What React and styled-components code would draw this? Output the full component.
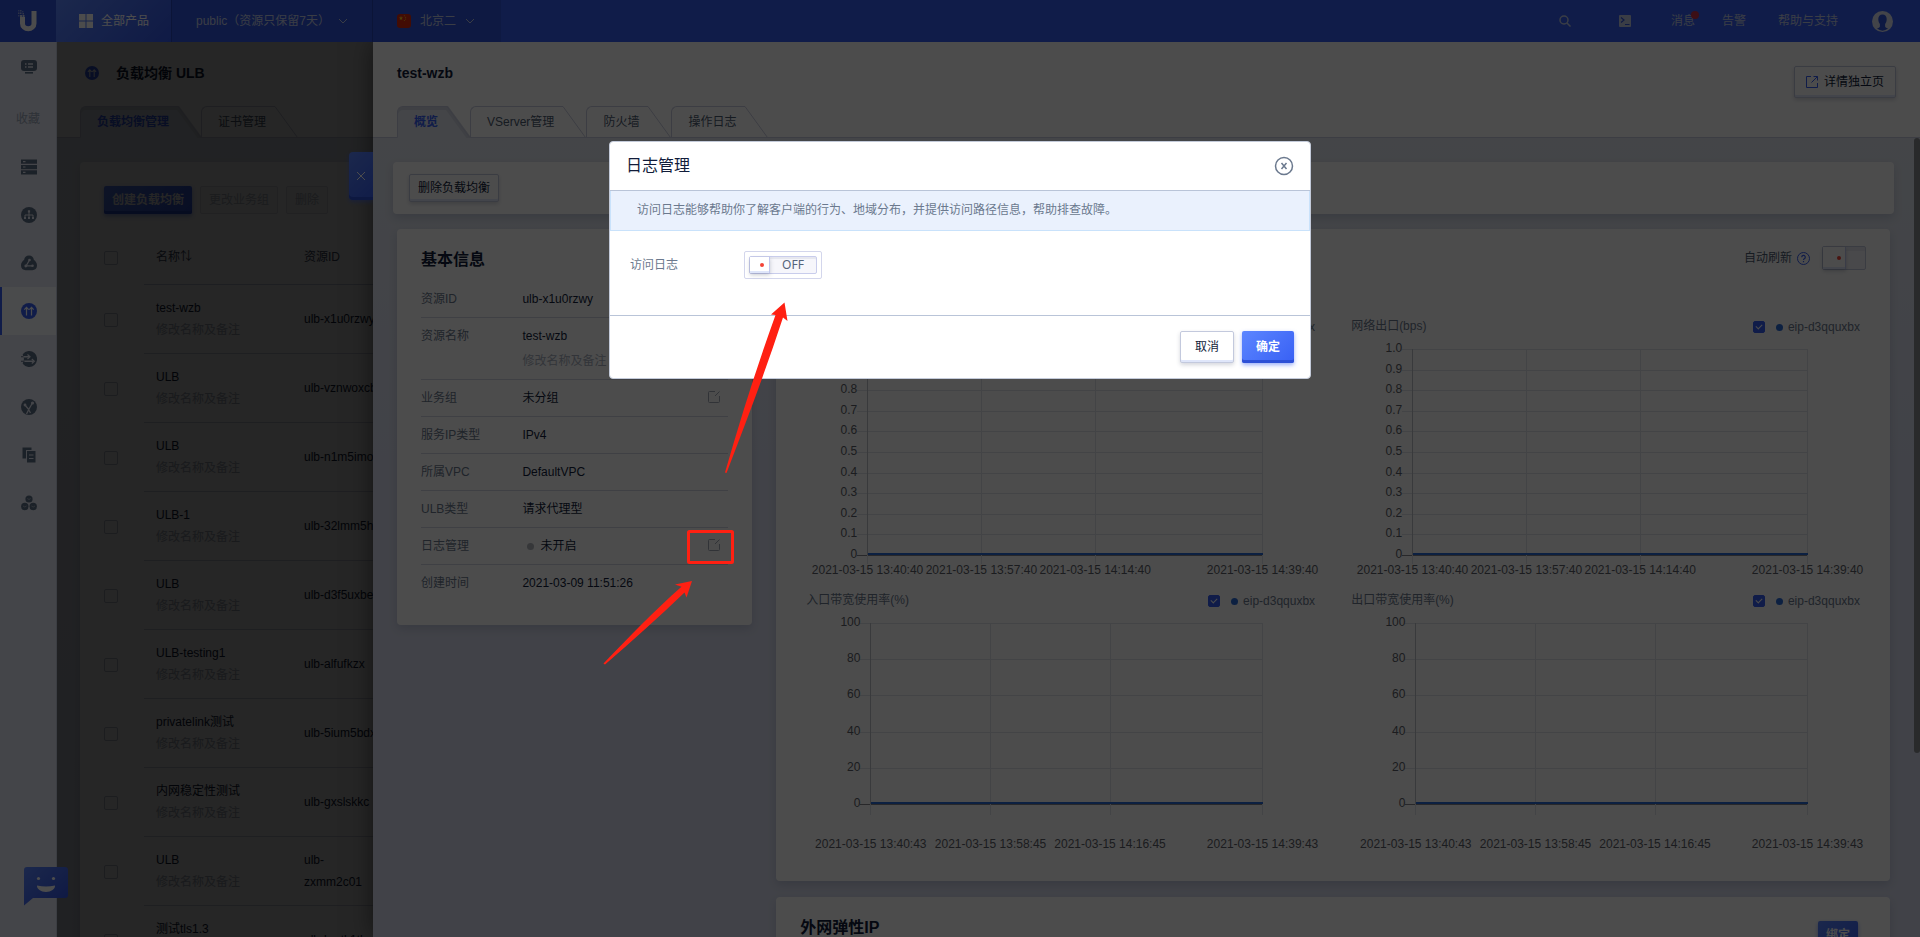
import React from "react";
import styled, { createGlobalStyle, css } from "styled-components";

const GlobalStyle = createGlobalStyle`
  *, *::before, *::after { box-sizing: border-box; }
  body {
    margin: 0;
    overflow: hidden;
    font-family: "Liberation Sans", "Noto Sans CJK SC", sans-serif;
    font-size: 12px;
    line-height: 20px;
    color: #111c3a;
  }
  button, input { font: inherit; color: inherit; margin: 0; }
  h1, h2, h3 { margin: 0; }
  a { color: inherit; text-decoration: none; }
`;

/* ---------- shell ---------- */

const Page = styled.div`
  display: flex;
  flex-direction: column;
  height: 100vh;
`;

const Main = styled.div`
  display: flex;
  flex: 1;
  min-height: 0;
`;

/* ---------- top bar ---------- */

const TopBar = styled.header`
  display: flex;
  height: 42px;
  background: #3860f4;
  color: #e3e9ff;
`;

const TopLeft = styled.div`
  display: flex;
  background: #3054dc;
`;

const LogoLink = styled.a`
  display: flex;
  align-items: center;
  justify-content: center;
  width: 56px;
`;

const TopButton = styled.button`
  display: flex;
  align-items: center;
  gap: ${(p) => p.$gap || 8}px;
  padding: 0 ${(p) => p.$right || 24}px 0 ${(p) => p.$left || 24}px;
  border: 0;
  border-right: 1px solid ${(p) => (p.$last ? "transparent" : "#2645b8")};
  color: ${(p) => (p.$active ? "#ffffff" : "#c3cde8")};
  background: ${(p) => (p.$active ? "linear-gradient(135deg, #5c86ff, #3458e8)" : "none")};
`;

const TopRight = styled.nav`
  display: flex;
  align-items: center;
  margin-left: auto;
  padding-right: 27px;
  color: #c3cde8;
`;

const IconButton = styled.button`
  display: flex;
  padding: 0;
  border: 0;
  background: none;
  margin-right: ${(p) => p.$after || 0}px;
`;

const TopLink = styled.a`
  position: relative;
  margin-right: ${(p) => p.$after}px;
`;

const Badge = styled.span`
  position: absolute;
  top: 0;
  right: -4px;
  width: 8px;
  height: 8px;
  border-radius: 50%;
  background: #c8324a;
`;

/* ---------- side bar ---------- */

const SideBar = styled.nav`
  display: flex;
  flex-direction: column;
  flex: none;
  width: 56px;
  padding-top: 1px;
  background: #e4e7f3;
  box-shadow: 1px 0 0 #c9d0e2;
  z-index: 1;
`;

const SideLink = styled.a`
  display: flex;
  align-items: center;
  justify-content: center;
  height: 48px;
  border-left: 2px solid ${(p) => (p.$active ? "#3860f4" : "transparent")};
  background: ${(p) => (p.$active ? "#f8faff" : "none")};
  color: ${(p) => (p.$active ? "#3860f4" : "#5d6e85")};
  --knock: ${(p) => (p.$active ? "#f8faff" : "#e4e7f3")};
`;

const SideLabel = styled.div`
  height: 52px;
  padding-top: 4px;
  line-height: 48px;
  text-align: center;
  color: #9aa6b8;
`;

/* ---------- shared parts ---------- */

const PageHead = styled.div`
  display: flex;
  flex-direction: column;
  justify-content: space-between;
  flex: none;
  height: 96px;
  padding: 21px 24px 0;
  border-bottom: 1px solid #c9ccdf;
  background: #ffffff;
`;

const HeadRow = styled.div`
  display: flex;
  align-items: flex-start;
  justify-content: space-between;
  height: 20px;
`;

const HeadTitle = styled.h1`
  display: flex;
  align-items: center;
  gap: 17px;
  padding-left: ${(p) => (p.$icon ? 5 : 0)}px;
  font-size: 14px;
  line-height: 20px;
  font-weight: bold;
`;

const TabRow = styled.div`
  display: flex;
  height: 32px;
  margin-bottom: -1px;
`;

const TabButton = styled.button`
  display: flex;
  padding: 0;
  border: 0;
  background: none;
  color: ${(p) => (p.$active ? "#3860f4" : "#4c5a70")};
  font-weight: ${(p) => (p.$active ? "bold" : "normal")};
`;

const TabText = styled.span`
  height: 32px;
  padding: 5px 8px 0 16px;
  border: 1px solid #c9ccdf;
  border-right: 0;
  border-bottom-color: ${(p) => (p.$active ? "#e3e8f0" : "#c9ccdf")};
  border-radius: 6px 0 0 0;
  background: ${(p) => (p.$active ? "#e3e8f0" : "#ffffff")};
  box-shadow: ${(p) => (p.$active ? "inset 0 3px 0 #d3d7e3" : "none")};
  line-height: 20px;
`;

const Slope = styled.svg`
  display: block;
  flex: none;
`;

const buttonLook = {
  plain: css`
    border: 1px solid #c3c9dd;
    background: #ffffff;
    box-shadow: inset 0 -2px 0 #dfe6fa, 0 2px 4px rgba(40, 50, 80, 0.2);
  `,
  primary: css`
    border: 0;
    background: linear-gradient(135deg, #5c86ff, #3860f4);
    color: #ffffff;
    font-weight: bold;
    box-shadow: inset 0 -3px 0 #2d50d6, 0 2px 4px rgba(56, 96, 244, 0.5);
  `,
  faint: css`
    border: 1px solid #dcdfe8;
    background: #fafafc;
    color: #b4bac6;
  `,
};

const Button = styled.button`
  display: inline-flex;
  align-items: center;
  justify-content: center;
  flex: none;
  gap: 6px;
  height: ${(p) => (p.$large ? 32 : 28)}px;
  padding: 0 ${(p) => p.$pad || 8}px;
  border-radius: 2px;
  white-space: nowrap;
  ${(p) => buttonLook[p.$look || "plain"]}
`;

const Card = styled.section`
  background: #ffffff;
  border-radius: 4px;
  box-shadow: 0 4px 8px rgba(60, 70, 110, 0.18);
`;

const CheckBox = styled.input`
  appearance: none;
  display: block;
  flex: none;
  position: relative;
  width: ${(p) => p.$size || 14}px;
  height: ${(p) => p.$size || 14}px;
  border: 1px solid #bcc3d4;
  border-radius: 2px;
  background: #ffffff;
  &:checked { background: #3860f4; border-color: #3860f4; }
  &:checked::after {
    content: "";
    position: absolute;
    left: 3px;
    top: 1px;
    width: 4px;
    height: 6px;
    border: solid #ffffff;
    border-width: 0 1px 1px 0;
    transform: rotate(45deg);
  }
`;

const HiddenInput = styled.input`
  position: absolute;
  opacity: 0;
  width: 100%;
  height: 100%;
  left: 0;
  top: 0;
`;

/* ---------- list page ---------- */

const Workspace = styled.div`
  position: relative;
  flex: 1;
  min-width: 0;
  overflow: hidden;
`;

const ListPage = styled.div`
  display: flex;
  flex-direction: column;
  height: 100%;
  overflow: hidden;
`;

const ListBody = styled.div`
  flex: 1;
  padding: 24px;
  background: linear-gradient(180deg, #e3e8f0, #d6dbea);
`;

const ListCard = styled(Card)`
  padding: 24px;
`;

const ButtonRow = styled.div`
  display: flex;
  gap: 8px;
`;

const Table = styled.table`
  width: 100%;
  margin-top: 16px;
  border-collapse: separate;
  border-spacing: 0;
  table-layout: fixed;
  line-height: 22px;
  text-align: left;
`;

const Th = styled.th`
  width: ${(p) => (p.$width ? p.$width + "px" : "auto")};
  height: 55px;
  padding: 0 ${(p) => (p.$check ? 0 : 12)}px;
  border-bottom: ${(p) => (p.$check ? 0 : 1)}px solid #c3c9dd;
  font-weight: normal;
  color: #3d4a60;
`;

const Td = styled.td`
  height: 69px;
  padding: 0 ${(p) => (p.$check ? 0 : 12)}px;
  border-bottom: ${(p) => (p.$check ? 0 : 1)}px solid #ccd1e0;
`;

const Remark = styled.div`
  color: #a9b0c0;
  margin-top: ${(p) => p.$top || 0}px;
`;

const DrawerMask = styled.div`
  position: absolute;
  inset: 0;
  background: rgba(0, 0, 0, 0.5);
`;

/* ---------- drawer ---------- */

const Drawer = styled.aside`
  position: absolute;
  top: 0;
  right: 0;
  bottom: 0;
  left: 317px;
  display: flex;
  flex-direction: column;
  box-shadow: 0 0 24px rgba(0, 0, 0, 0.5);
  background: #ffffff;
`;

const DrawerClose = styled.button`
  position: absolute;
  left: -24px;
  top: 110px;
  display: flex;
  align-items: center;
  justify-content: center;
  width: 24px;
  height: 48px;
  padding: 0;
  border: 0;
  border-radius: 4px 0 0 4px;
  background: linear-gradient(135deg, #5c86ff, #3860f4);
  box-shadow: inset 0 -3px 0 #2d50d6, 0 2px 4px rgba(56, 96, 244, 0.5);
  color: #ffffff;
`;

const DrawerBody = styled.div`
  position: relative;
  flex: 1;
  min-height: 0;
  overflow: hidden;
  padding: 24px 26px 0 20px;
  background: linear-gradient(180deg, #e3e8f0, #dadef0 40%, #dadef0);
`;

const ScrollThumb = styled.div`
  position: absolute;
  top: 0;
  right: 0;
  width: 6px;
  height: 77%;
  border-radius: 3px;
  background: #8b8d92;
`;

const ActionCard = styled(Card)`
  padding: 12px 16px;
  height: 52px;
`;

const Columns = styled.div`
  display: grid;
  grid-template-columns: repeat(4, 1fr);
  gap: 24px;
  align-items: start;
  margin-top: 15px;
  padding: 0 4px;
`;

const InfoCard = styled(Card)`
  padding: 20px 24px 23px;
`;

const CardTitle = styled.h2`
  font-size: 16px;
  line-height: 22px;
  font-weight: bold;
`;

const InfoList = styled.dl`
  margin: 10px 0 0;
`;

const InfoRow = styled.div`
  display: flex;
  padding: 8px 0;
  border-bottom: 1px solid #d3d7e3;
  &:last-child { border-color: transparent; }
`;

const InfoLabel = styled.dt`
  width: 33%;
  flex: none;
  color: #6b798e;
`;

const InfoValue = styled.dd`
  display: flex;
  justify-content: space-between;
  align-items: flex-start;
  flex: 1;
  margin: 0;
`;

const EditButton = styled(IconButton)`
  padding: 3px 8px 0 0;
  color: #a3abba;
`;

const StatusDot = styled.span`
  display: inline-block;
  width: 7px;
  height: 7px;
  margin: 0 6px 0 5px;
  border-radius: 50%;
  background: #b4b8c0;
`;

const RightColumn = styled.div`
  grid-column: span 3;
  display: flex;
  flex-direction: column;
  gap: 16px;
`;

const ChartCard = styled(Card)`
  padding: 17px 12px;
`;

const RefreshRow = styled.div`
  display: flex;
  align-items: center;
  justify-content: flex-end;
  gap: 5px;
  height: 24px;
  margin-bottom: 46px;
  padding-right: 12px;
  color: #4c5a70;
`;

const MiniSwitch = styled.label`
  position: relative;
  display: flex;
  width: 44px;
  height: 24px;
  margin-left: 7px;
  border: 1px solid #c3c9dd;
  border-radius: 2px;
  background: #f6f6fb;
  box-shadow: inset 0 4px 0 #e6e8f2;
`;

const Knob = styled.span`
  display: flex;
  align-items: center;
  justify-content: flex-end;
  width: ${(p) => p.$width}px;
  padding-right: ${(p) => p.$pad}px;
  border-right: 1px solid #c3c9ee;
  background: #ffffff;
  box-shadow: inset 0 -2px 0 #dfe6fa, 0 2px 4px rgba(40, 50, 80, 0.25);
  &::after {
    content: "";
    width: 4px;
    height: 4px;
    border-radius: 50%;
    background: #f44336;
  }
`;

const ChartGrid = styled.div`
  display: grid;
  grid-template-columns: 1fr 1fr;
`;

const ChartHead = styled.div`
  display: flex;
  justify-content: space-between;
  height: 20px;
  padding: 0 18px;
  color: #6b798e;
`;

const ChartTitle = styled.h3`
  font-size: 12px;
  font-weight: normal;
`;

const Legend = styled.label`
  display: flex;
  align-items: center;
  padding-top: 2px;
`;

const LegendDot = styled.span`
  width: 7px;
  height: 7px;
  margin: 0 5px 0 11px;
  border-radius: 50%;
  background: #2b6cd9;
`;

const Plot = styled.svg`
  display: block;
  width: 100%;
  height: 254px;
  shape-rendering: crispEdges;
  text { font-size: 12px; fill: #5c6068; }
`;

const EipCard = styled(Card)`
  display: flex;
  justify-content: space-between;
  padding: 20px 32px 40px 24px;
`;

const EipAction = styled.div`
  padding-top: 4px;
`;

/* ---------- chat, modal, marks ---------- */

const ChatButton = styled.button`
  position: fixed;
  left: 24px;
  bottom: 31px;
  z-index: 2;
  display: flex;
  padding: 0;
  border: 0;
  background: none;
`;

const Overlay = styled.div`
  position: fixed;
  inset: 0;
  z-index: 3;
  display: flex;
  justify-content: center;
  align-items: flex-start;
  padding-top: 141px;
  background: rgba(0, 0, 0, 0.7);
`;

const Modal = styled.div`
  width: 702px;
  border: 1px solid #c3cad9;
  border-radius: 4px;
  background: #ffffff;
`;

const ModalHead = styled.div`
  display: flex;
  align-items: center;
  justify-content: space-between;
  height: 49px;
  padding: 0 16px;
  border-bottom: 1px solid #b9c4d8;
`;

const ModalTitle = styled.h2`
  font-size: 16px;
  line-height: 24px;
  font-weight: normal;
`;

const Notice = styled.p`
  margin: 0;
  padding: 9px 26px 10px;
  border: 1px solid #c9e2fb;
  border-top: 0;
  background: #eaf1fd;
  color: #6b798e;
`;

const ModalBody = styled.div`
  display: flex;
  align-items: center;
  padding: 20px 20px 36px;
`;

const FieldLabel = styled.label`
  width: 114px;
  color: #6b798e;
`;

const SwitchFrame = styled.div`
  padding: 4px;
  border: 1px solid #d3d6ec;
  border-radius: 2px;
`;

const Switch = styled.div`
  position: relative;
  display: flex;
  width: 68px;
  height: 18px;
  border: 1px solid #c9cdec;
  border-radius: 2px;
  background: #f6f6fb;
  box-shadow: inset 0 2px 0 #e6e7ef;
  font-family: "Noto Sans", "Noto Sans CJK SC", sans-serif;
  line-height: 16px;
  color: #55647a;
`;

const SwitchText = styled.span`
  flex: 1;
  text-align: center;
`;

const ModalFoot = styled.div`
  display: flex;
  justify-content: flex-end;
  gap: 8px;
  padding: 15px 16px;
  border-top: 1px solid #b9c4d8;
`;

const Marks = styled.svg`
  position: fixed;
  left: 0;
  top: 0;
  z-index: 4;
  pointer-events: none;
`;

/* ---------- icons ---------- */

const Chevron = () => (
  <svg width="10" height="10" viewBox="0 0 10 10" fill="none" stroke="currentColor" strokeWidth="1">
    <path d="M1 3l4 4 4-4" />
  </svg>
);

const LogoIcon = () => (
  <svg width="20" height="22" viewBox="0 0 20 22">
    <path d="M4.500 7V13.500a5.750 5.250 0 0 0 11.500 0V1" fill="none" stroke="#fff" strokeWidth="5" />
    <g fill="#fff">
      <rect x="0" y="0" width="1.500" height="1.500" opacity=".35" />
      <rect x="2" y="0" width="1.500" height="1.500" opacity=".5" />
      <rect x="4" y="1" width="1.500" height="1.500" opacity=".35" />
      <rect x="0" y="2.500" width="1.500" height="1.500" opacity=".5" />
      <rect x="2" y="2.500" width="1.500" height="1.500" opacity=".6" />
      <rect x="4.500" y="3" width="1.500" height="1.500" opacity=".6" />
      <rect x="0" y="5" width="1.500" height="1.500" opacity=".4" />
      <rect x="2" y="5" width="2" height="2" opacity=".8" />
      <rect x="4.500" y="5" width="2" height="2" opacity=".8" />
    </g>
  </svg>
);

const FlagIcon = () => (
  <svg width="14" height="14" viewBox="0 0 14 14">
    <rect width="14" height="14" rx="3" fill="#dd2b10" />
    <path d="M4 2l.6 1.400 1.500.1-1.200 1 .4 1.500L4 5.200 2.700 6l.4-1.500-1.200-1 1.500-.1z" fill="#ffd21c" />
    <g fill="#ffd21c">
      <circle cx="7.300" cy="1.800" r=".5" />
      <circle cx="8.600" cy="3.200" r=".5" />
      <circle cx="8.600" cy="5" r=".5" />
      <circle cx="7.300" cy="6.400" r=".5" />
    </g>
  </svg>
);

const UlbIcon = ({ size = 16, knock = "var(--knock)" }) => (
  <svg width={size} height={size} viewBox="0 0 16 16">
    <circle cx="8" cy="8" r="8" fill="currentColor" />
    <path d="M5.500 12.500V4.500M10.500 12.500V4.500M3.300 6.700l2.200-2.300 2.200 2.300M8.300 6.700l2.200-2.300 2.200 2.300" fill="none" stroke={knock} strokeWidth="1.200" />
  </svg>
);

const K = "var(--knock)";
const sideIcons = {
  monitor: (
    <>
      <rect x="0" y="1" width="16" height="11" rx="3" fill="currentColor" />
      <rect x="4" y="13" width="8" height="1.600" fill="currentColor" />
      <path d="M4 5h1.500M7 5h5M4 8h1.500M7 8h5" stroke={K} strokeWidth="1.300" />
    </>
  ),
  server: (
    <>
      <path d="M0 .5h16v4.300H0zM0 5.900h16v4.300H0zM0 11.300h16v4.300H0z" fill="currentColor" />
      <path d="M2 2.600h2.500M2 8h2.500M2 13.400h2.500" stroke={K} strokeWidth="1.200" />
    </>
  ),
  network: (
    <>
      <circle cx="8" cy="8" r="8" fill="currentColor" />
      <path d="M8 4v7M4 11V8h8v3" fill="none" stroke={K} strokeWidth="1" />
      <path d="M6.900 3.200h2.200v2.200H6.900zM3 10h2v2H3zM7 10h2v2H7zM11 10h2v2h-2z" fill={K} />
    </>
  ),
  tri: (
    <>
      <path d="M8 .5c2.800 0 4.600 1.800 4.800 4.300C15 6.500 16 8.300 16 10.500c0 2.800-2 4.700-4.700 4.700H4.700C2 15.200 0 13.300 0 10.500 0 8.300 1 6.500 3.200 4.800 3.400 2.300 5.200.5 8 .5z" fill="currentColor" />
      <path d="M8.500 5L5.200 10.800h6" fill="none" stroke={K} strokeWidth="1.300" />
      <circle cx="8.500" cy="5" r="1.300" fill={K} />
      <circle cx="4.800" cy="11" r="1.400" fill={K} />
      <circle cx="11.500" cy="10.800" r="1.300" fill={K} />
    </>
  ),
  nat: (
    <>
      <path d="M1.700 3.200a8 8 0 1 1 0 9.600L3 8z" fill="currentColor" />
      <path d="M0 4.900h8v1.600H0zM0 9.400h12V11H0z" fill={K} />
      <path d="M0 5.200h2.500v1H0zM0 9.700h3.500v1H0z" fill="currentColor" />
      <path d="M6.500 3.500L9 5.700 6.500 8M10.800 8l2.500 2.200-2.500 2.300" fill="none" stroke={K} strokeWidth="1.200" />
    </>
  ),
  branch: (
    <>
      <circle cx="8" cy="8" r="8" fill="currentColor" />
      <path d="M4 6l3.300 4M11.300 4.200L8 10l-2.500 5M7.500 10.500l2 3.500" fill="none" stroke={K} strokeWidth="1.300" />
      <circle cx="4" cy="6" r="1.400" fill={K} />
      <circle cx="11.500" cy="4" r="1.600" fill={K} />
    </>
  ),
  copy: (
    <>
      <path d="M1.500.5h9v2.500H5v8.500H1.500z" fill="currentColor" />
      <rect x="6" y="4" width="8.500" height="11.500" fill="currentColor" />
      <path d="M8 8h4.500M8 11.500h4.500" stroke={K} strokeWidth="1.200" />
    </>
  ),
  balls: (
    <>
      <circle cx="8" cy="4" r="3.600" fill="currentColor" />
      <circle cx="3.800" cy="11.500" r="3.700" fill="currentColor" />
      <circle cx="12.200" cy="11.500" r="3.700" fill="currentColor" />
      <path d="M6.300 3.500L8 4.500l1.700-1M2 11l1.800 1 1.800-1M10.400 11l1.800 1 1.800-1" fill="none" stroke={K} strokeWidth=".8" opacity=".6" />
    </>
  ),
};

const SideIcon = ({ name }) =>
  name === "ulb" ? <UlbIcon /> : (
    <svg width="16" height="16" viewBox="0 0 16 16">{sideIcons[name]}</svg>
  );

const EditIcon = () => (
  <svg width="12" height="12" viewBox="0 0 12 12" fill="none" stroke="currentColor">
    <path d="M7 .5H1.500a1 1 0 0 0-1 1v9a1 1 0 0 0 1 1h9a1 1 0 0 0 1-1V5M7 5L11.500.5" />
  </svg>
);

/* ---------- data ---------- */

const sideItems = [
  ["server", "主机"],
  ["network", "网络"],
  ["tri", "存储"],
  ["ulb", "负载均衡"],
  ["nat", "网关"],
  ["branch", "加速"],
  ["copy", "镜像"],
  ["balls", "集群"],
];

const rows = [
  ["test-wzb", "ulb-x1u0rzwy"],
  ["ULB", "ulb-vznwoxcb"],
  ["ULB", "ulb-n1m5imoq"],
  ["ULB-1", "ulb-32lmm5ht"],
  ["ULB", "ulb-d3f5uxbe"],
  ["ULB-testing1", "ulb-alfufkzx"],
  ["privatelink测试", "ulb-5ium5bdx"],
  ["内网稳定性测试", "ulb-gxslskkc"],
  ["ULB", "ulb- zxmm2c01"],
  ["测试tls1.3", "ulb-hmtk1tlu"],
];

const bpsChart = {
  ticks: ["1.0", "0.9", "0.8", "0.7", "0.6", "0.5", "0.4", "0.3", "0.2", "0.1", "0"],
  base: 219,
  height: 206,
  left: 14.6,
  labelRight: 12.7,
  tail: 228,
  times: [["13:40:40", 0], ["13:57:40", 17], ["14:14:40", 34], ["14:39:40", 59]],
};
const rateChart = {
  ticks: ["100", "80", "60", "40", "20", "0"],
  base: 194,
  height: 181,
  left: 15.2,
  labelRight: 13.3,
  tail: 205,
  times: [["13:40:43", 0], ["13:58:45", 18.03], ["14:16:45", 36.03], ["14:39:43", 59]],
};
const charts = [
  ["网络入口(bps)", bpsChart],
  ["网络出口(bps)", bpsChart],
  ["入口带宽使用率(%)", rateChart],
  ["出口带宽使用率(%)", rateChart],
];

/* ---------- composed parts ---------- */

function Tabs({ items }) {
  return (
    <TabRow role="tablist">
      {items.map((label, i) => {
        const active = i === 0;
        const fill = active ? "#e3e8f0" : "#ffffff";
        return (
          <TabButton key={label} role="tab" aria-selected={active} $active={active}>
            <TabText $active={active}>{label}</TabText>
            <Slope width="24" height="32" viewBox="0 0 24 32">
              <path d="M0 0h1l23 32H0z" fill={fill} />
              {active && <path d="M0 2h1l22 30" fill="none" stroke="#d3d7e3" strokeWidth="4" />}
              <path d="M0 .5h1L23.500 31.500" fill="none" stroke="#c9ccdf" />
              {!active && <path d="M0 31.500h24" stroke="#c9ccdf" />}
            </Slope>
          </TabButton>
        );
      })}
    </TabRow>
  );
}

function Chart({ title, spec }) {
  const right = 87.1;
  const step = spec.height / (spec.ticks.length - 1);
  const top = spec.base - spec.height;
  const pos = (m) => `${spec.left + ((right - spec.left) * m) / 59}%`;
  return (
    <div>
      <ChartHead>
        <ChartTitle>{title}</ChartTitle>
        <Legend>
          <CheckBox type="checkbox" defaultChecked $size={12} />
          <LegendDot />
          eip-d3qquxbx
        </Legend>
      </ChartHead>
      <Plot role="img" aria-label={title}>
        {spec.ticks.map((t, i) => {
          const y = Math.round(top + i * step) + 0.5;
          const last = i === spec.ticks.length - 1;
          return (
            <g key={t}>
              <line x1={`${spec.labelRight}%`} x2={`${right}%`} y1={y} y2={y} stroke={last ? "#85888e" : "#e2e4ea"} />
              <text x={`${spec.labelRight}%`} y={y + 2.5} textAnchor="end">{t}</text>
            </g>
          );
        })}
        {spec.times.map(([time, m], i) => (
          <g key={time}>
            <line x1={pos(m)} x2={pos(m)} y1={top} y2={spec.tail} stroke="#e2e4ea" />
            {i === 0 && <line x1={pos(m)} x2={pos(m)} y1={top} y2={spec.base} stroke="#bfc2ca" />}
            <text x={pos(m)} y="238" textAnchor="middle">2021-03-15 {time}</text>
          </g>
        ))}
        <line x1={pos(0)} x2={pos(59)} y1={spec.base - 1} y2={spec.base - 1} stroke="#2b6cd9" strokeWidth="2" />
      </Plot>
    </div>
  );
}

function Info({ label, children, edit }) {
  return (
    <InfoRow>
      <InfoLabel>{label}</InfoLabel>
      <InfoValue>
        <div>{children}</div>
        {edit && <EditButton aria-label={`编辑${label}`}><EditIcon /></EditButton>}
      </InfoValue>
    </InfoRow>
  );
}

function TopNav() {
  return (
    <TopBar>
      <TopLeft>
        <LogoLink href="#home" aria-label="UCloud"><LogoIcon /></LogoLink>
        <TopButton $active $left={23} $right={22}>
          <svg width="14" height="14" viewBox="0 0 14 14" fill="currentColor">
            <path d="M0 0h6.500v6.500H0zM7.500 0H14v6.500H7.500zM0 7.500h6.500V14H0zM7.500 7.500H14V14H7.500z" />
          </svg>
          全部产品
        </TopButton>
        <TopButton $right={24}>public（资源只保留7天）<Chevron /></TopButton>
        <TopButton $gap={9} $right={25} $last><FlagIcon />北京二<Chevron /></TopButton>
      </TopLeft>
      <TopRight>
        <IconButton aria-label="搜索" $after={48}>
          <svg width="12" height="12" viewBox="0 0 12 12" fill="none" stroke="currentColor" strokeWidth="1.500">
            <circle cx="5" cy="5" r="4" /><path d="M8 8l3.500 3.500" />
          </svg>
        </IconButton>
        <IconButton aria-label="终端" $after={40}>
          <svg width="12" height="12" viewBox="0 0 12 12">
            <rect width="12" height="12" rx="1" fill="currentColor" />
            <path d="M2 2.500l3 2.500-3 2.500M6 9.500h4.500" fill="none" stroke="#3054dc" strokeWidth="1.200" />
          </svg>
        </IconButton>
        <TopLink href="#message" $after={27}>消息<Badge /></TopLink>
        <TopLink href="#alarm" $after={32}>告警</TopLink>
        <TopLink href="#support" $after={34}>帮助与支持</TopLink>
        <IconButton aria-label="账户">
          <svg width="21" height="21" viewBox="0 0 21 21">
            <circle cx="10.500" cy="10.500" r="10.500" fill="#dfe4f5" />
            <path d="M10.500 3.500c2.600 0 4.200 1.900 4.200 4.500 0 2.200-.7 3.900-1.600 5v2.500c.3 1.200 1.600 1.500 3 2.100a9.300 9.300 0 0 1-11.200 0c1.400-.6 2.700-.9 3-2.100V13c-.9-1.100-1.600-2.800-1.600-5 0-2.600 1.600-4.500 4.200-4.500z" fill="#3054dc" />
          </svg>
        </IconButton>
      </TopRight>
    </TopBar>
  );
}

function LoadBalancerList() {
  return (
    <ListPage>
      <PageHead>
        <HeadRow>
          <HeadTitle $icon>
            <IconTint><UlbIcon size={14} knock="#ffffff" /></IconTint>
            负载均衡 ULB
          </HeadTitle>
        </HeadRow>
        <Tabs items={["负载均衡管理", "证书管理"]} />
      </PageHead>
      <ListBody>
        <ListCard>
          <ButtonRow>
            <Button $look="primary">创建负载均衡</Button>
            <Button $look="faint" disabled>更改业务组</Button>
            <Button $look="faint" disabled>删除</Button>
          </ButtonRow>
          <Table>
            <thead>
              <tr>
                <Th $check $width={40}><CheckBox type="checkbox" aria-label="全选" /></Th>
                <Th $width={148}>名称⇅</Th>
                <Th>资源ID</Th>
              </tr>
            </thead>
            <tbody>
              {rows.map(([name, id], i) => (
                <tr key={i}>
                  <Td $check><CheckBox type="checkbox" aria-label={name} /></Td>
                  <Td>{name}<Remark>修改名称及备注</Remark></Td>
                  <Td>
                    {id.split(" ").map((part) => <div key={part}>{part}</div>)}
                  </Td>
                </tr>
              ))}
            </tbody>
          </Table>
        </ListCard>
      </ListBody>
    </ListPage>
  );
}

const IconTint = styled.span`
  display: flex;
  color: #3860f4;
`;

const LinkIcon = () => (
  <IconTint>
    <svg width="12" height="12" viewBox="0 0 12 12" fill="none" stroke="currentColor">
      <path d="M5 .5H.5v11h11V7M7.500.5h4v4M5.500 6.500l6-6" />
    </svg>
  </IconTint>
);

function DetailDrawer() {
  return (
    <Drawer>
      <DrawerClose aria-label="关闭详情">
        <svg width="8" height="8" viewBox="0 0 8 8" stroke="currentColor"><path d="M0 0l8 8M8 0L0 8" /></svg>
      </DrawerClose>
      <PageHead>
        <HeadRow>
          <HeadTitle>test-wzb</HeadTitle>
          <DetailAction><Button $large $pad={11}><LinkIcon />详情独立页</Button></DetailAction>
        </HeadRow>
        <Tabs items={["概览", "VServer管理", "防火墙", "操作日志"]} />
      </PageHead>
      <DrawerBody>
        <ScrollThumb />
        <ActionCard><Button>删除负载均衡</Button></ActionCard>
        <Columns>
          <InfoCard>
            <CardTitle>基本信息</CardTitle>
            <InfoList>
              <Info label="资源ID">ulb-x1u0rzwy</Info>
              <Info label="资源名称">test-wzb<Remark $top={5}>修改名称及备注</Remark></Info>
              <Info label="业务组" edit>未分组</Info>
              <Info label="服务IP类型">IPv4</Info>
              <Info label="所属VPC">DefaultVPC</Info>
              <Info label="ULB类型">请求代理型</Info>
              <Info label="日志管理" edit><StatusDot />未开启</Info>
              <Info label="创建时间">2021-03-09 11:51:26</Info>
            </InfoList>
          </InfoCard>
          <RightColumn>
            <ChartCard>
              <RefreshRow>
                <span id="refresh">自动刷新</span>
                <IconTint>
                  <svg width="13" height="13" viewBox="0 0 13 13" fill="none" stroke="currentColor">
                    <circle cx="6.500" cy="6.500" r="6" />
                    <path d="M4.700 5.200a1.800 1.800 0 1 1 2.600 1.600c-.6.300-.8.600-.8 1.300M6.500 9v1.200" strokeWidth="1.200" />
                  </svg>
                </IconTint>
                <MiniSwitch>
                  <HiddenInput type="checkbox" role="switch" aria-labelledby="refresh" />
                  <Knob $width={23} $pad={4} />
                </MiniSwitch>
              </RefreshRow>
              <ChartGrid>
                {charts.map(([title, spec]) => <Chart key={title} title={title} spec={spec} />)}
              </ChartGrid>
            </ChartCard>
            <EipCard>
              <CardTitle>外网弹性IP</CardTitle>
              <EipAction><Button $look="primary">绑定</Button></EipAction>
            </EipCard>
          </RightColumn>
        </Columns>
      </DrawerBody>
    </Drawer>
  );
}

const DetailAction = styled.div`
  padding-top: 3px;
`;

function LogModal() {
  return (
    <Overlay>
      <Modal role="dialog" aria-labelledby="log-title">
        <ModalHead>
          <ModalTitle id="log-title">日志管理</ModalTitle>
          <IconButton aria-label="关闭">
            <svg width="20" height="20" viewBox="0 0 20 20" fill="none" stroke="#6b798e" strokeWidth="1.500">
              <circle cx="10" cy="10" r="8.500" />
              <path d="M7.500 7l5 6M12.500 7l-5 6" strokeWidth="1.500" />
            </svg>
          </IconButton>
        </ModalHead>
        <Notice>访问日志能够帮助你了解客户端的行为、地域分布，并提供访问路径信息，帮助排查故障。</Notice>
        <ModalBody>
          <FieldLabel htmlFor="access-log">访问日志</FieldLabel>
          <SwitchFrame>
            <Switch>
              <HiddenInput id="access-log" type="checkbox" role="switch" />
              <Knob $width={20} $pad={5} />
              <SwitchText>OFF</SwitchText>
            </Switch>
          </SwitchFrame>
        </ModalBody>
        <ModalFoot>
          <Button $large $pad={14}>取消</Button>
          <Button $large $pad={14} $look="primary">确定</Button>
        </ModalFoot>
      </Modal>
    </Overlay>
  );
}

export default function App() {
  return (
    <>
      <GlobalStyle />
      <Page>
        <TopNav />
        <Main>
          <SideBar>
            <SideLink href="#overview" aria-label="总览"><SideIcon name="monitor" /></SideLink>
            <SideLabel>收藏</SideLabel>
            {sideItems.map(([icon, label]) => (
              <SideLink key={icon} href={`#${icon}`} aria-label={label} $active={icon === "ulb"}>
                <SideIcon name={icon} />
              </SideLink>
            ))}
          </SideBar>
          <Workspace>
            <LoadBalancerList />
            <DrawerMask />
            <DetailDrawer />
          </Workspace>
        </Main>
      </Page>
      <ChatButton aria-label="在线客服">
        <svg width="44" height="39" viewBox="0 0 44 39">
          <defs>
            <linearGradient id="chat" x1="0" y1="0" x2="1" y2="1">
              <stop offset="0" stopColor="#5c86ff" />
              <stop offset="1" stopColor="#3050e0" />
            </linearGradient>
          </defs>
          <path d="M3 0h38a3 3 0 0 1 3 3v25a3 3 0 0 1-3 3H9l-9 7.500V3a3 3 0 0 1 3-3z" fill="url(#chat)" />
          <circle cx="14.500" cy="11.500" r="1.600" fill="#fff" />
          <circle cx="29.500" cy="11.500" r="1.600" fill="#fff" />
          <path d="M13 18.500c6 1.200 12 1.200 18 0 .4 3.500-4 6.500-9 6.500s-9.400-3-9-6.500z" fill="#fff" />
        </svg>
      </ChatButton>
      <LogModal />
      <Marks width="800" height="700" viewBox="0 0 800 700" aria-hidden="true">
        <rect x="688.500" y="531.500" width="44" height="31" rx="1" fill="none" stroke="#ff2012" strokeWidth="3" />
        <path d="M692 581L675 584.500 681.500 586.800C655 610 630 636 603.500 663.500L605 664.500C632 641 658 618 684.500 592.500L686.500 597.500z" fill="#ff2012" />
        <path d="M784.500 302.500L771 314.500 775.500 315C757 366 740 420 725 472.500L726.500 473C746 422 766 370 783 317.500L787.500 321z" fill="#ff2012" />
      </Marks>
    </>
  );
}
